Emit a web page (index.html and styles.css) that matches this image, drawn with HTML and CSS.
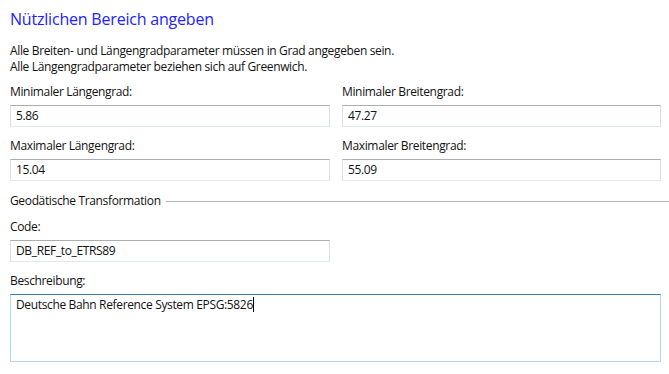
FILE: index.html
```html
<!DOCTYPE html>
<html lang="de">
<head>
  <meta charset="UTF-8" />
  <title>Nützlichen Bereich angeben</title>
  <link rel="stylesheet" href="styles.css">
</head>
<body>
<div class="page">
  <h1 class="title">Nützlichen Bereich angeben</h1>
  <p class="info">Alle Breiten- und Längengradparameter müssen in Grad angegeben sein.<br>Alle Längengradparameter beziehen sich auf Greenwich.</p>

  <div class="grid">
    <div class="field">
      <label>Minimaler Längengrad:</label>
      <div class="box">5.86</div>
    </div>
    <div class="field">
      <label>Minimaler Breitengrad:</label>
      <div class="box">47.27</div>
    </div>
    <div class="field">
      <label>Maximaler Längengrad:</label>
      <div class="box">15.04</div>
    </div>
    <div class="field">
      <label>Maximaler Breitengrad:</label>
      <div class="box">55.09</div>
    </div>
  </div>

  <div class="group-head">
    <span>Geodätische Transformation</span>
    <span class="rule"></span>
  </div>

  <div class="field half">
    <label>Code:</label>
    <div class="box">DB_REF_to_ETRS89</div>
  </div>

  <div class="field">
    <label>Beschreibung:</label>
    <div class="box area focused">Deutsche Bahn Reference System EPSG:5826<span class="caret"></span></div>
  </div>
</div>
</body>
</html>
```

FILE: styles.css
```css
body {
  margin: 0;
  background: #fff;
  font-family: 'Open Sans', 'Noto Sans', Arial, sans-serif;
  font-size: 12px;
  letter-spacing: -0.35px;
  color: #111;
}
.page {
  padding: 0 8px 0 10px;
}
.title {
  margin: 0;
  padding-top: 7px;
  font-size: 16px;
  font-weight: 400;
  line-height: 24px;
  letter-spacing: -0.2px;
  color: #2222ff;
}
.info {
  margin: 12px 0 9px;
  line-height: 16px;
}
.grid {
  display: grid;
  grid-template-columns: 320px 319px;
  column-gap: 12px;
  row-gap: 11px;
}
.field label {
  display: block;
  line-height: 16px;
  margin-bottom: 5px;
}
.box {
  height: 22px;
  box-sizing: border-box;
  padding: 0 5px;
  line-height: 20px;
  border: 1px solid #dbdfe6;
  border-top-color: #abadb3;
  border-bottom-color: #e3e9ef;
  background: #fff;
  white-space: nowrap;
}
.half {
  width: 320px;
  margin-bottom: 11px;
}
.group-head {
  display: flex;
  align-items: center;
  margin: 12px -8px 10px 0;
  line-height: 16px;
}
.rule {
  flex: 1;
  height: 1px;
  background: #b4b4b4;
  margin-left: 5px;
}
.area {
  height: 68px;
  padding-top: 2px;
  line-height: 16px;
}
.focused {
  border-color: #b5d5ef;
  border-top-color: #3d7bad;
}
.caret {
  display: inline-block;
  width: 1px;
  height: 15px;
  background: #000;
  vertical-align: -3px;
}
```
